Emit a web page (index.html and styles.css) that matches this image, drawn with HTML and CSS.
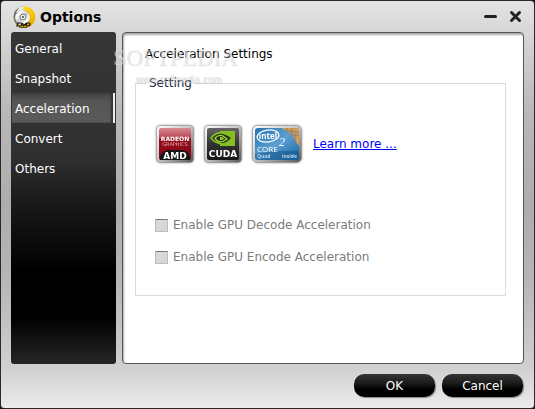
FILE: index.html
```
<!DOCTYPE html>
<html lang="en">
<head>
<meta charset="utf-8">
<meta name="viewport" content="width=device-width, initial-scale=1">
<title>Options</title>
<link rel="stylesheet" href="styles.css">
</head>
<body>
<div class="window">
  <header class="titlebar">
    <svg class="app-icon" viewBox="0 0 24 24" aria-hidden="true">
      <defs>
        <linearGradient id="disc" x1="0" y1="0" x2="1" y2="1">
          <stop offset="0" stop-color="#999"/><stop offset=".25" stop-color="#fff"/><stop offset=".5" stop-color="#ccc"/><stop offset=".75" stop-color="#fff"/><stop offset="1" stop-color="#aaa"/>
        </linearGradient>
        <linearGradient id="gold" x1="0" y1="0" x2="1" y2="1">
          <stop offset="0" stop-color="#ffe34a"/><stop offset=".6" stop-color="#f7c700"/><stop offset="1" stop-color="#e39a00"/>
        </linearGradient>
      </defs>
      <circle cx="12.500" cy="12" r="10.800" fill="url(#gold)"/>
      <path d="M11 1.500Q2 3 1.500 12 2 17 5 20L7 8z" fill="#666"/>
      <path d="M8 2L4 7l4 2 4-7z" fill="#eee"/>
      <circle cx="10.500" cy="12.500" r="7.500" fill="url(#disc)" stroke="#999" stroke-width=".4"/>
      <circle cx="11" cy="12" r="3" fill="#eee" stroke="#555" stroke-width=".8"/>
      <circle cx="11" cy="12" r="1" fill="#444"/>
      <path d="M6 18h3c2 0 1 3-1 3H5zM10.500 18l1 3 3-3M15 18h2c2 0 1 3-1 3h-2z" fill="none" stroke="#111" stroke-width="1.200"/>
      <path d="M7 22.500h8" stroke="#333" stroke-width=".8"/>
    </svg>
    <h1 class="title">Options</h1>
    <div class="window-controls">
      <button class="control" type="button" aria-label="Minimize"><svg viewBox="0 0 13 13"><path d="M1.500 6.500h10" /></svg></button>
      <button class="control" type="button" aria-label="Close"><svg viewBox="0 0 13 13"><path d="M2.500 2.500l8 8M10.500 2.500l-8 8"/></svg></button>
    </div>
  </header>
  <div class="body">
    <nav class="sidebar">
      <a class="tab" href="#general">General</a>
      <a class="tab" href="#snapshot">Snapshot</a>
      <a class="tab tab-active" href="#acceleration" aria-current="page">Acceleration</a>
      <a class="tab" href="#convert">Convert</a>
      <a class="tab" href="#others">Others</a>
    </nav>
    <main class="panel">
      <h2 class="heading">Acceleration Settings</h2>
      <fieldset class="group">
        <legend>Setting</legend>
        <div class="badges">
          <svg class="badge" viewBox="0 0 40 40" role="img" aria-label="AMD Radeon Graphics">
            <defs>
              <linearGradient id="chrome" x1="0" y1="0" x2="1" y2="1"><stop offset="0" stop-color="#fff"/><stop offset=".5" stop-color="#c4c4c4"/><stop offset="1" stop-color="#555"/></linearGradient>
              <linearGradient id="red" x1="0" y1="0" x2="0" y2="1"><stop offset="0" stop-color="#d98a92"/><stop offset=".3" stop-color="#b94855"/><stop offset=".36" stop-color="#900d1c"/><stop offset="1" stop-color="#8c0614"/></linearGradient>
            </defs>
            <rect x="1.500" y="1.500" width="37" height="37" rx="4" fill="url(#chrome)" stroke="#999" stroke-width=".7"/>
            <rect x="4" y="4" width="32" height="32" rx="2" fill="url(#red)"/>
            <path d="M5 36V32q3-6 9-6h12q7 0 9 6v4z" fill="#161616"/>
            <text class="logo-radeon" x="20" y="17" text-anchor="middle">RADEON</text>
            <text class="logo-graphics" x="20" y="22" text-anchor="middle">GRAPHICS</text>
            <text class="logo-amd" x="20" y="35" text-anchor="middle">AMD</text>
          </svg>
          <svg class="badge" viewBox="0 0 40 40" role="img" aria-label="NVIDIA CUDA">
            <defs><linearGradient id="dark" x1="0" y1="0" x2="0" y2="1"><stop offset="0" stop-color="#666"/><stop offset=".5" stop-color="#333"/><stop offset="1" stop-color="#161616"/></linearGradient></defs>
            <rect x="1.500" y="1.500" width="37" height="37" rx="4" fill="url(#chrome)" stroke="#999" stroke-width=".7"/>
            <rect x="4" y="4" width="32" height="32" rx="2" fill="url(#dark)"/>
            <path d="M17 7h15v15H17z" fill="#86c020"/>
            <path d="M8 14q5-6 11-5 6 1 10 5-5 6-10 6-7-1-11-6z" fill="#293317" stroke="#86c020" stroke-width="1.600"/>
            <path d="M12 14q4-4 8-2l4 3q-4 3-7 3-4-1-5-4z" fill="#293317" stroke="#9bd536" stroke-width="1.300"/>
            <path d="M17 13q4 0 4 2-2 1-4 1z" fill="#9bd536"/>
            <text class="logo-cuda" x="20" y="33" text-anchor="middle">CUDA</text>
          </svg>
          <svg class="badge badge-wide" viewBox="0 0 52 40" role="img" aria-label="Intel Core 2 Quad inside">
            <defs><linearGradient id="blue" x1="0" y1="0" x2="1" y2="1"><stop offset="0" stop-color="#2474b2"/><stop offset=".5" stop-color="#5b9fd0"/><stop offset="1" stop-color="#1766a4"/></linearGradient></defs>
            <rect x="1.500" y="1.500" width="49" height="37" rx="5" fill="url(#chrome)" stroke="#999" stroke-width=".7"/>
            <rect x="4" y="4" width="44" height="32" rx="3" fill="url(#blue)"/>
            <path d="M30 4h15q3 0 3 3v15q-3-3-5-8-4-6-13-10z" fill="#d79a50"/>
            <path d="M36 4v3h4v4h8M41 4v4h7M44 11v7" fill="none" stroke="#617e8d" stroke-width=".8"/>
            <path d="M4 30q20-4 44-3v7q0 2-3 2H7q-3 0-3-3z" fill="#135286" opacity=".55"/>
            <ellipse cx="17" cy="12" rx="11" ry="6" fill="none" stroke="#fff" stroke-width="1.200" transform="rotate(-8 17 12)"/>
            <text class="logo-intel" x="17" y="15" text-anchor="middle">intel</text>
            <text class="logo-core" x="6" y="28">CORE</text>
            <text class="logo-two" x="28" y="22">2</text>
            <text class="logo-small" x="6" y="34">Quad</text>
            <text class="logo-small" x="31" y="34">inside</text>
          </svg>
          <a class="learn-more" href="#learn-more">Learn more ...</a>
        </div>
        <div class="options">
          <label class="option"><input type="checkbox" disabled>Enable GPU Decode Acceleration</label>
          <label class="option"><input type="checkbox" disabled>Enable GPU Encode Acceleration</label>
        </div>
      </fieldset>
    </main>
  </div>
  <footer class="actions">
    <button class="action" type="button">OK</button>
    <button class="action" type="button">Cancel</button>
  </footer>
  <div class="watermark" aria-hidden="true">
    <div class="watermark-name">SOFTPEDIA<sup>™</sup></div>
    <div class="watermark-site">www.softpedia.com</div>
  </div>
</div>
</body>
</html>
```
FILE: styles.css
```
* { box-sizing: border-box; }
body {
  margin: 0;
  background: #111;
  font: 12px/16px "DejaVu Sans", Verdana, sans-serif;
  color: #000;
}
.window {
  position: relative;
  display: flex;
  flex-direction: column;
  min-height: 100vh;
  border: 1px solid #2b272b;
  border-radius: 4px;
  background: linear-gradient(#e3e3e3, #d7d7d7 32px, #b8b8b8 110px, #adadad 50%, #b5b5b5 68%, #d0d0d0 90%, #ebebeb);
}
.titlebar {
  display: flex;
  align-items: center;
  height: 31px;
  padding: 0 12px 0 11px;
}
.app-icon { width: 24px; height: 24px; }
.title { margin: 0 0 0 4px; font-size: 14px; line-height: 20px; }
.window-controls { display: flex; gap: 12px; margin-left: auto; }
.control { display: flex; padding: 0; border: 0; background: none; }
.control svg { width: 13px; height: 13px; fill: none; stroke: #222; stroke-width: 3; stroke-linecap: round; }
.body { display: flex; flex: 1; gap: 6px; padding: 0 10px; }
.sidebar {
  flex: 0 0 105px;
  padding-top: 1px;
  border-radius: 3px;
  background: linear-gradient(#363636, #303030 38%, #1b1b1b 50%, #000 72%, #000 86%, #262626);
}
.tab {
  display: block;
  height: 30px;
  padding: 1px 4px 0;
  line-height: 30px;
  color: #fff;
  text-decoration: none;
}
.tab-active {
  margin: 0 1px;
  padding: 1px 3px 0;
  border-right: 2px solid #eee;
  background: linear-gradient(#424242, #555 8px, #5b5b5b);
  box-shadow: inset -2px 0 2px #333;
}
.panel {
  flex: 1;
  min-width: 0;
  padding: 13px 17px;
  border: 1px solid #555;
  border-radius: 4px;
  background: #fff;
  box-shadow: inset 1px 2px 2px #aaa;
}
.heading { margin: 0 0 13px 5px; font-size: 12px; font-weight: normal; line-height: 16px; }
.group {
  min-width: 0;
  min-height: 221px;
  margin: 0 0 0 -5px;
  padding: 33px 16px 0 19px;
  border: 1px solid #dcdcdc;
}
.group legend { margin-left: -8px; padding: 0 2px; color: #17213d; }
.badges { display: flex; align-items: center; gap: 8px; }
.badge { width: 40px; height: 40px; filter: drop-shadow(0 0 1px #999); }
.badge-wide { width: 52px; }
.learn-more { margin-left: 2px; color: #00f; }
.logo-radeon { font: bold 6px "DejaVu Sans", sans-serif; fill: #fff; }
.logo-graphics { font: 5px "DejaVu Sans", sans-serif; fill: #e4a5ab; }
.logo-amd { font: bold 9px "DejaVu Sans", sans-serif; fill: #fff; }
.logo-cuda { font: bold 9px "DejaVu Sans", sans-serif; fill: #fff; }
.logo-intel { font: bold 8px "Open Sans", sans-serif; fill: #fff; }
.logo-core { font: 8px "Open Sans", sans-serif; fill: #fff; }
.logo-two { font: italic 12px "Liberation Serif", serif; fill: #fff; }
.logo-small { font: bold 5px "Open Sans", sans-serif; fill: #b5d8ee; }
.options { display: grid; gap: 16px; margin-top: 53px; }
.option { display: flex; align-items: center; gap: 5px; color: #7b7b7b; }
.option input {
  width: 13px;
  height: 13px;
  margin: 0;
  appearance: none;
  border: 1px solid #bcbcbc;
  border-top-color: #777;
  background: #d8d8d8;
}
.actions { display: flex; justify-content: flex-end; gap: 7px; padding: 10px 11px 11px; }
.action {
  width: 81px;
  height: 23px;
  padding: 0;
  border: 0;
  border-radius: 10px;
  background: linear-gradient(#353535, #171717 45%, #000 65%);
  box-shadow: 1px 1px 1px #888;
  color: #fff;
  font: inherit;
}
.watermark {
  position: absolute;
  top: 45px;
  left: 112px;
  width: 131px;
  text-align: center;
  pointer-events: none;
  font-family: "Liberation Serif", serif;
  color: rgba(240, 240, 240, .5);
  text-shadow: 1px 1px 1px rgba(170, 170, 170, .4);
}
.watermark-name { font-size: 23px; line-height: 24px; white-space: nowrap; }
.watermark-name sup { font-size: 7px; vertical-align: top; line-height: 8px; }
.watermark-site { font: 10px/20px "Liberation Sans", sans-serif; color: rgba(215, 215, 215, .6); }
```
